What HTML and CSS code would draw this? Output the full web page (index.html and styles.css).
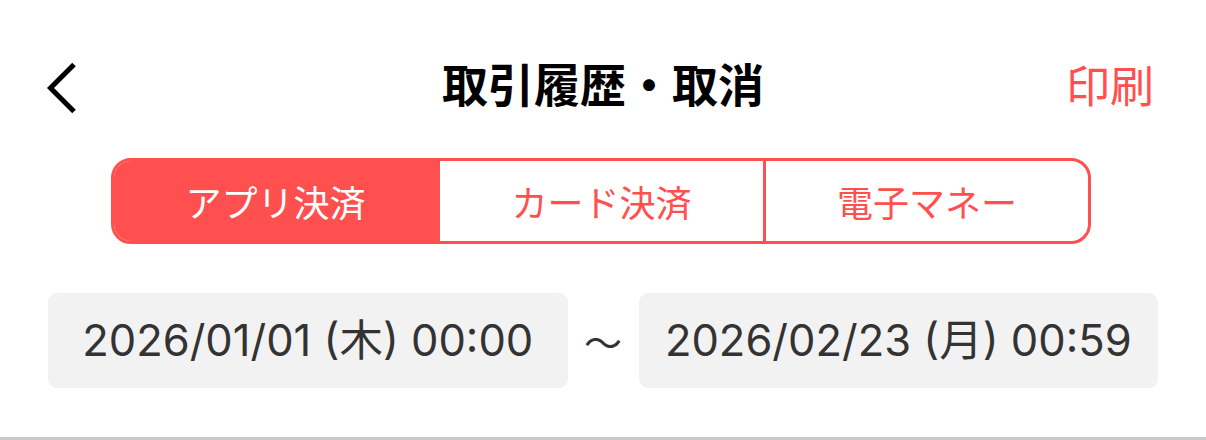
FILE: index.html
```html
<!DOCTYPE html>
<html lang="ja">
<head>
<meta charset="utf-8">
<title>取引履歴・取消</title>
<link rel="stylesheet" href="styles.css">
</head>
<body>
<div class="screen">
  <header class="nav">
    <button class="back" aria-label="戻る">
      <svg width="34" height="54" viewBox="0 0 34 54"><path d="M29 3.5 L5.5 27 L29 50.5" fill="none" stroke="#000" stroke-width="5" stroke-linecap="butt" stroke-linejoin="miter"/></svg>
    </button>
    <h1 class="title">取引履歴・取消</h1>
    <button class="print">印刷</button>
  </header>
  <div class="segments">
    <div class="seg active">アプリ決済</div>
    <div class="seg">カード決済</div>
    <div class="seg">電子マネー</div>
  </div>
  <div class="range">
    <div class="date">2026/01/01 (木) 00:00</div>
    <div class="tilde">〜</div>
    <div class="date">2026/02/23 (月) 00:59</div>
  </div>
  <div class="spacer"></div>
  <div class="divider"></div>
</div>
</body>
</html>
```
FILE: styles.css
```css
html, body {
  margin: 0;
  padding: 0;
  background: #fff;
}
.screen {
  width: 1206px;
  height: 440px;
  display: flex;
  flex-direction: column;
  font-family: "Noto Sans CJK JP", sans-serif;
  overflow: hidden;
}
.nav {
  margin-top: 40px;
  height: 96px;
  padding: 0 52px 0 45px;
  display: flex;
  align-items: center;
  justify-content: space-between;
  position: relative;
}
.back {
  border: 0;
  background: none;
  padding: 0;
  width: 34px;
  height: 54px;
  display: flex;
}
.title {
  position: absolute;
  left: 0;
  right: 0;
  top: 0;
  bottom: 0;
  display: flex;
  align-items: center;
  justify-content: center;
  padding-bottom: 12px;
  margin: 0;
  font-size: 46px;
  font-weight: 700;
  line-height: 1;
  color: #000;
  pointer-events: none;
}
.print {
  border: 0;
  background: none;
  padding: 0 0 9px;
  font-family: "Noto Sans CJK JP", sans-serif;
  font-size: 44px;
  line-height: 1;
  color: #ff4f4f;
}
.segments {
  margin: 22px 0 0 111px;
  width: 980px;
  height: 86px;
  box-sizing: border-box;
  border: 3px solid #ff4f4f;
  border-radius: 20px;
  display: grid;
  grid-template-columns: 323px 326px 1fr;
  overflow: hidden;
}
.seg {
  display: flex;
  align-items: center;
  justify-content: center;
  font-size: 36px;
  line-height: 1;
  color: #ff4f4f;
  border-left: 3px solid #ff4f4f;
}
.seg:first-child {
  border-left: 0;
}
.seg.active {
  background: #ff4f4f;
  color: #fff;
}
.range {
  margin-top: 49px;
  padding: 0 48px;
  display: grid;
  grid-template-columns: 1fr 71px 1fr;
  height: 95px;
}
.date {
  background: #f2f2f2;
  border-radius: 9px;
  display: flex;
  align-items: center;
  justify-content: center;
  font-family: Inter, "Noto Sans CJK JP", sans-serif;
  font-size: 43.5px;
  color: #333;
  line-height: 1;
}
.tilde {
  display: flex;
  align-items: center;
  justify-content: center;
  font-size: 38px;
  color: #333;
}
.spacer {
  flex: 1;
}
.divider {
  height: 3px;
  background: #c8c8c8;
}
```
